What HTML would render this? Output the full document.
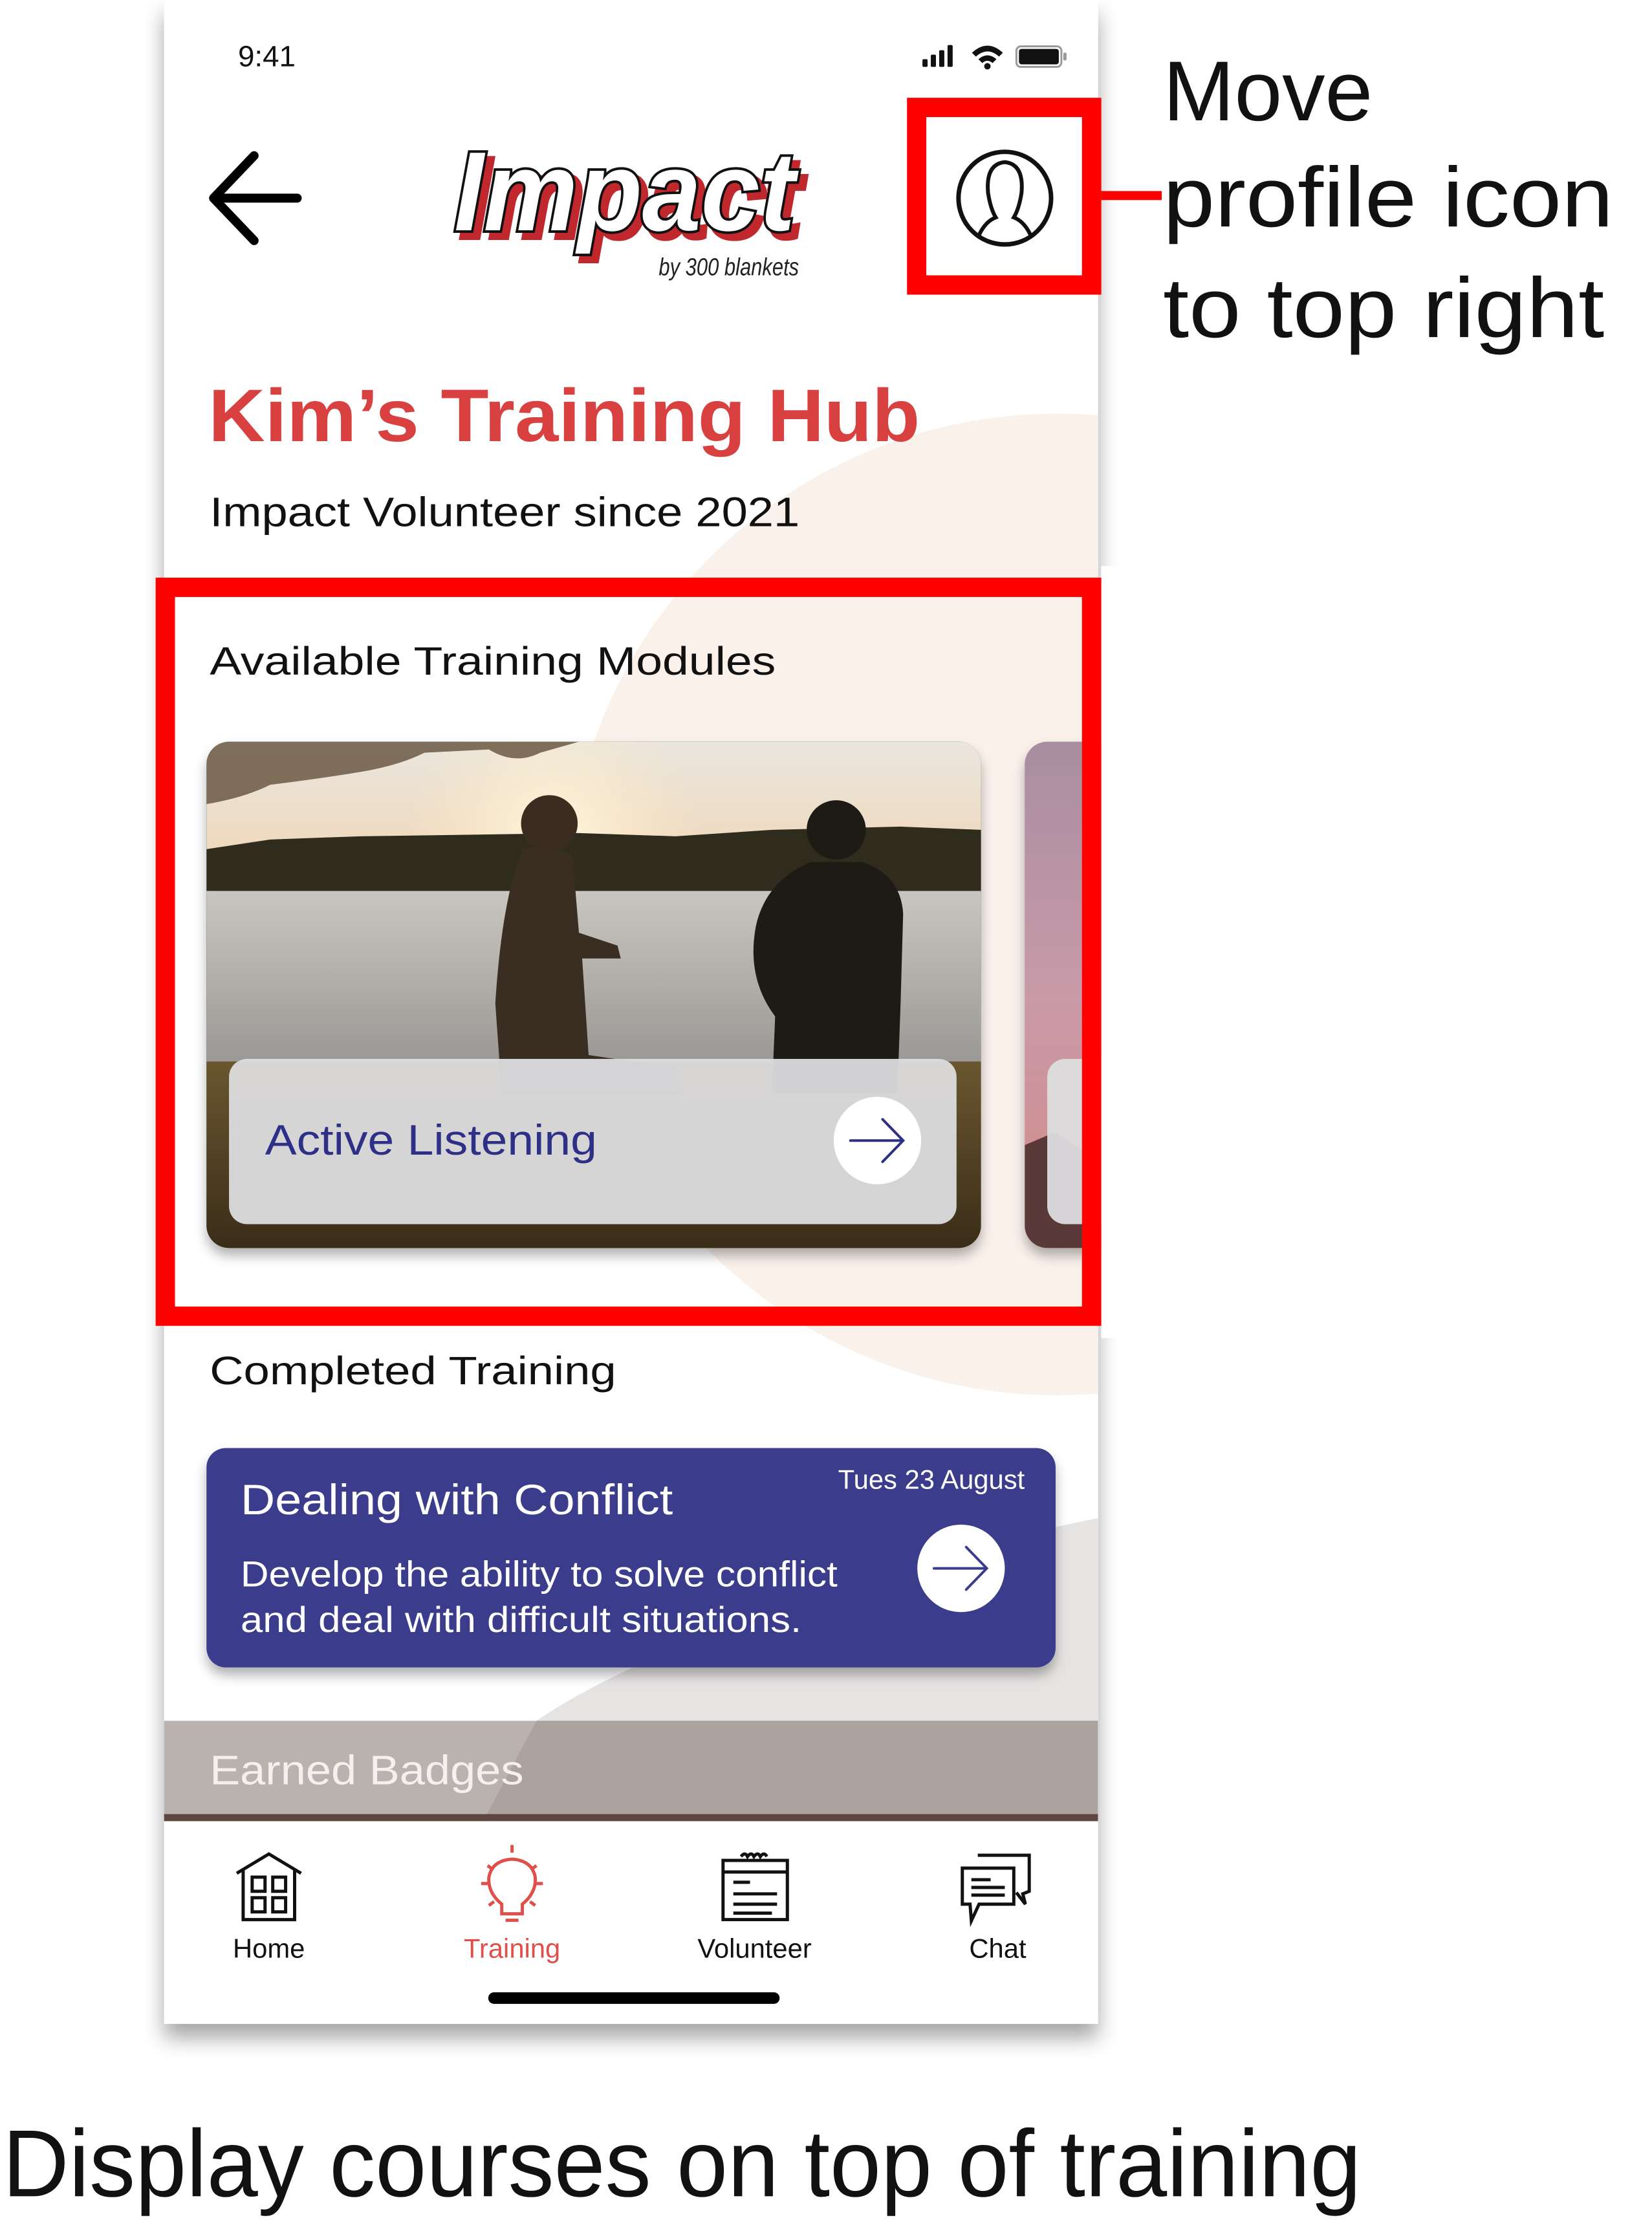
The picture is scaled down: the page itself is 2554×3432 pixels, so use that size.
<!DOCTYPE html>
<html><head><meta charset="utf-8"><style>
html,body{margin:0;padding:0;background:#fff;}
svg{display:block;}
text{font-family:"Liberation Sans",sans-serif;}
</style></head><body>
<svg width="2554" height="3432" viewBox="0 0 2554 3432" xmlns="http://www.w3.org/2000/svg">
<defs>
<filter id="ph" x="-10%" y="-10%" width="120%" height="120%"><feDropShadow dx="0" dy="22" stdDeviation="16" flood-color="#000" flood-opacity="0.35"/></filter>
<filter id="cs" x="-10%" y="-10%" width="120%" height="130%"><feDropShadow dx="0" dy="12" stdDeviation="9" flood-color="#000" flood-opacity="0.3"/></filter>
<clipPath id="phc"><rect x="255" y="0" width="1452" height="3146"/></clipPath>
<clipPath id="c1"><rect x="321" y="1153" width="1204" height="787" rx="35"/></clipPath>
<clipPath id="c2"><rect x="1593" y="1153" width="300" height="787" rx="35"/></clipPath>
<linearGradient id="sky" x1="0" y1="0" x2="0" y2="1"><stop offset="0" stop-color="#e9e6df"/><stop offset="1" stop-color="#f2d4b0"/></linearGradient>
<linearGradient id="water" x1="0" y1="0" x2="0" y2="1"><stop offset="0" stop-color="#c9c6c0"/><stop offset="1" stop-color="#9a9894"/></linearGradient>
<linearGradient id="ground" x1="0" y1="0" x2="0" y2="1"><stop offset="0" stop-color="#6a5630"/><stop offset="1" stop-color="#3a2d18"/></linearGradient>
<radialGradient id="sun" cx="0.5" cy="0.5" r="0.5"><stop offset="0" stop-color="#fff8e0" stop-opacity="1"/><stop offset="1" stop-color="#ffe8c0" stop-opacity="0"/></radialGradient>
<linearGradient id="pink" x1="0" y1="0" x2="0" y2="1"><stop offset="0" stop-color="#a88ea0"/><stop offset="0.5" stop-color="#c99aa8"/><stop offset="1" stop-color="#d48a88"/></linearGradient>
</defs>
<g transform="scale(0.9945)">
<!-- phone -->
<rect x="255" y="0" width="1452" height="3146" fill="#fff" filter="url(#ph)"/>
<g clip-path="url(#phc)">
  <circle cx="1643" cy="1406" r="763" fill="#faf1eb"/>
  <path d="M1707,2360 C1400,2420 1000,2560 834,2675 L757,2820 L1707,2820 Z" fill="#e6e4e3"/>
  <rect x="255" y="2675" width="1452" height="145" fill="#bab2ae"/>
  <path d="M834,2675 L1707,2675 L1707,2820 L757,2820 Z" fill="#aca29e"/>
  <rect x="255" y="2820" width="1452" height="11" fill="#5e4640"/>
</g>

<!-- status bar -->
<text x="370" y="103" font-size="46" fill="#111">9:41</text>
<g fill="#111">
  <rect x="1434" y="92" width="8" height="12" rx="2"/>
  <rect x="1447" y="85" width="8" height="19" rx="2"/>
  <rect x="1460" y="78" width="8" height="26" rx="2"/>
  <rect x="1473" y="70" width="8" height="34" rx="2"/>
  <path d="M1511,82 Q1535,60 1559,82 L1553,88 Q1535,72 1517,88 Z"/>
  <path d="M1521,92 Q1535,80 1549,92 L1543,98 Q1535,91 1527,98 Z"/>
  <circle cx="1535" cy="103" r="5"/>
  <rect x="1580" y="72" width="70" height="32" rx="7" fill="none" stroke="#999" stroke-width="3"/>
  <rect x="1584" y="76" width="62" height="24" rx="4"/>
  <rect x="1653" y="82" width="5" height="12" rx="2" fill="#999"/>
</g>

<!-- back arrow -->
<path d="M462,308 L334,308 M395,242 L332,308 L395,374" fill="none" stroke="#000" stroke-width="14" stroke-linecap="round" stroke-linejoin="round"/>

<!-- logo -->
<text x="716" y="368" font-family="Liberation Serif" font-style="italic" font-weight="bold" font-size="175" fill="#c0282e" stroke="#c0282e" stroke-width="10" textLength="530" lengthAdjust="spacingAndGlyphs">Impact</text>
<text x="706" y="358" font-family="Liberation Serif" font-style="italic" font-weight="bold" font-size="175" fill="#fff" stroke="#111" stroke-width="8" paint-order="stroke" textLength="530" lengthAdjust="spacingAndGlyphs">Impact</text>
<text x="1024" y="428" font-family="Liberation Serif" font-style="italic" font-size="38" fill="#222" textLength="218" lengthAdjust="spacingAndGlyphs">by 300 blankets</text>

<!-- profile icon -->
<circle cx="1562" cy="308" r="72" fill="none" stroke="#111" stroke-width="7"/>
<path d="M1520,370 Q1530,345 1548,338 Q1540,325 1536,300 Q1532,255 1562,252 Q1592,255 1588,300 Q1584,325 1576,338 Q1594,345 1604,370" fill="none" stroke="#111" stroke-width="6"/>

<!-- red box 1 + connector -->
<rect x="1425" y="167" width="272" height="276" fill="none" stroke="#f00" stroke-width="30"/>
<rect x="1712" y="297" width="94" height="14" fill="#f00"/>

<!-- annotation -->
<text x="1808" y="187" font-size="132" fill="#111" textLength="326" lengthAdjust="spacingAndGlyphs">Move</text>
<text x="1808" y="352" font-size="132" fill="#111" textLength="700" lengthAdjust="spacingAndGlyphs">profile icon</text>
<text x="1808" y="524" font-size="132" fill="#111" textLength="686" lengthAdjust="spacingAndGlyphs">to top right</text>

<!-- titles -->
<text x="324" y="686" font-size="116" font-weight="bold" fill="#d94040" textLength="1106" lengthAdjust="spacingAndGlyphs">Kim’s Training Hub</text>
<text x="326" y="818" font-size="64" fill="#111" textLength="917" lengthAdjust="spacingAndGlyphs">Impact Volunteer since 2021</text>
<text x="326" y="1049" font-size="62" fill="#111" textLength="880" lengthAdjust="spacingAndGlyphs">Available Training  Modules</text>

<!-- card 1 photo -->
<g filter="url(#cs)"><rect x="321" y="1153" width="1204" height="787" rx="35" fill="#4a3a20"/></g>
<g clip-path="url(#c1)">
  <rect x="321" y="1153" width="1204" height="240" fill="url(#sky)"/>
  <circle cx="860" cy="1310" r="230" fill="url(#sun)"/>
  <path d="M321,1320 L420,1305 L560,1300 L700,1298 L900,1295 L1050,1300 L1200,1290 L1400,1285 L1525,1290 L1525,1395 L321,1385 Z" fill="#2f2c1e"/>
  <rect x="321" y="1385" width="1204" height="270" fill="url(#water)"/>
  <rect x="800" y="1385" width="80" height="270" fill="#f5ecd4" opacity="0.5"/>
  <rect x="321" y="1650" width="1204" height="290" fill="url(#ground)"/>
  <path d="M321,1153 L321,1250 Q380,1240 420,1220 Q500,1210 560,1200 Q620,1190 660,1170 L760,1165 Q800,1190 840,1170 L900,1153 Z" fill="#5a4630" opacity="0.75"/>
  <circle cx="854" cy="1280" r="44" fill="#3a2c1e"/>
  <path d="M812,1320 Q850,1310 890,1330 L900,1450 L960,1470 L965,1490 L905,1490 L915,1640 L1050,1660 L1060,1700 L780,1700 L770,1560 Q780,1400 812,1320 Z" fill="#3a2e22"/>
  <circle cx="1300" cy="1290" r="46" fill="#1e1a16"/>
  <path d="M1260,1340 L1340,1340 Q1400,1360 1404,1420 L1400,1560 L1395,1700 L1200,1700 L1205,1580 Q1160,1520 1175,1440 Q1190,1370 1260,1340 Z" fill="#1e1a16"/>
</g>
<rect x="356" y="1646" width="1131" height="257" rx="28" fill="#dedee0" opacity="0.94"/>
<text x="412" y="1795" font-size="66" fill="#2e2f86" textLength="516" lengthAdjust="spacingAndGlyphs">Active Listening</text>
<circle cx="1364" cy="1773" r="68" fill="#fff"/>
<path d="M1322,1773 L1402,1773 M1372,1740 L1404,1773 L1372,1806" fill="none" stroke="#2e2f86" stroke-width="4" stroke-linecap="round"/>

<!-- card 2 peek -->
<g filter="url(#cs)"><rect x="1593" y="1153" width="300" height="787" rx="35" fill="url(#pink)"/></g>
<g clip-path="url(#c2)">
  <path d="M1593,1780 L1640,1760 L1700,1800 L1700,1940 L1593,1940 Z" fill="#5a3a38"/>
</g>
<rect x="1628" y="1646" width="200" height="257" rx="28" fill="#dedee0" opacity="0.94"/>

<rect x="1712" y="880" width="200" height="1200" fill="#fff"/>

<!-- red box 2 -->
<rect x="257" y="913" width="1440" height="1133" fill="none" stroke="#f00" stroke-width="30"/>

<!-- completed -->
<text x="326" y="2152" font-size="62" fill="#111" textLength="632" lengthAdjust="spacingAndGlyphs">Completed Training</text>
<g filter="url(#cs)"><rect x="321" y="2251" width="1320" height="341" rx="30" fill="#3a3d8c"/></g>
<text x="374" y="2354" font-size="66" fill="#fff" textLength="672" lengthAdjust="spacingAndGlyphs">Dealing with Conflict</text>
<text x="1593" y="2314" font-size="42" fill="#fff" text-anchor="end">Tues 23 August</text>
<text x="374" y="2466" font-size="56" fill="#fff" textLength="928" lengthAdjust="spacingAndGlyphs">Develop the ability to solve conflict</text>
<text x="374" y="2537" font-size="56" fill="#fff" textLength="872" lengthAdjust="spacingAndGlyphs">and deal with difficult situations.</text>
<circle cx="1494" cy="2438" r="68" fill="#fff"/>
<path d="M1452,2438 L1532,2438 M1502,2405 L1534,2438 L1502,2471" fill="none" stroke="#3a3d8c" stroke-width="4" stroke-linecap="round"/>

<text x="326" y="2774" font-size="64" fill="#f4f0ee" textLength="488" lengthAdjust="spacingAndGlyphs">Earned Badges</text>

<!-- nav icons -->
<g fill="none" stroke="#111" stroke-width="5">
  <path d="M368,2912 L418,2882 L468,2912 M378,2906 L378,2984 L458,2984 L458,2906"/>
  <rect x="392" y="2918" width="20" height="22"/><rect x="424" y="2918" width="20" height="22"/>
  <rect x="392" y="2950" width="20" height="22"/><rect x="424" y="2950" width="20" height="22"/>
</g>
<g fill="none" stroke="#e0504a" stroke-width="5">
  <path d="M780,2975 L780,2960 Q758,2942 760,2918 Q765,2892 796,2890 Q827,2892 832,2918 Q834,2942 812,2960 L812,2975 Z"/>
  <path d="M786,2985 L806,2985 M796,2868 L796,2880 M758,2900 L766,2906 M834,2900 L826,2906 M748,2928 L758,2928 M834,2928 L844,2928 M760,2962 L768,2956 M832,2962 L824,2956"/>
</g>
<g fill="none" stroke="#111" stroke-width="5">
  <rect x="1124" y="2892" width="100" height="92"/>
  <path d="M1124,2910 L1224,2910 M1140,2926 L1166,2926 M1140,2944 L1208,2944 M1140,2960 L1208,2960 M1140,2974 L1200,2974"/>
  <path d="M1152,2886 q6,-8 10,0 q6,-8 10,0 q6,-8 10,0 q6,-8 10,0"/>
</g>
<g fill="none" stroke="#111" stroke-width="5">
  <path d="M1520,2884 L1600,2884 L1600,2940 L1590,2944 L1594,2960 L1580,2942"/>
  <path d="M1496,2904 L1576,2904 L1576,2960 L1522,2960 L1510,2986 L1508,2960 L1496,2960 Z"/>
  <path d="M1510,2922 L1540,2922 M1510,2934 L1562,2934 M1510,2946 L1562,2946"/>
</g>
<text x="418" y="3043" font-size="42" fill="#111" text-anchor="middle">Home</text>
<text x="796" y="3043" font-size="42" fill="#e0504a" text-anchor="middle">Training</text>
<text x="1173" y="3043" font-size="42" fill="#111" text-anchor="middle">Volunteer</text>
<text x="1551" y="3043" font-size="42" fill="#111" text-anchor="middle">Chat</text>
<rect x="759" y="3097" width="453" height="18" rx="9" fill="#000"/>

<!-- caption -->
<text x="4" y="3414" font-size="148" fill="#111" textLength="2112" lengthAdjust="spacingAndGlyphs">Display courses on top of training</text>
</g>
</svg>
</body></html>
